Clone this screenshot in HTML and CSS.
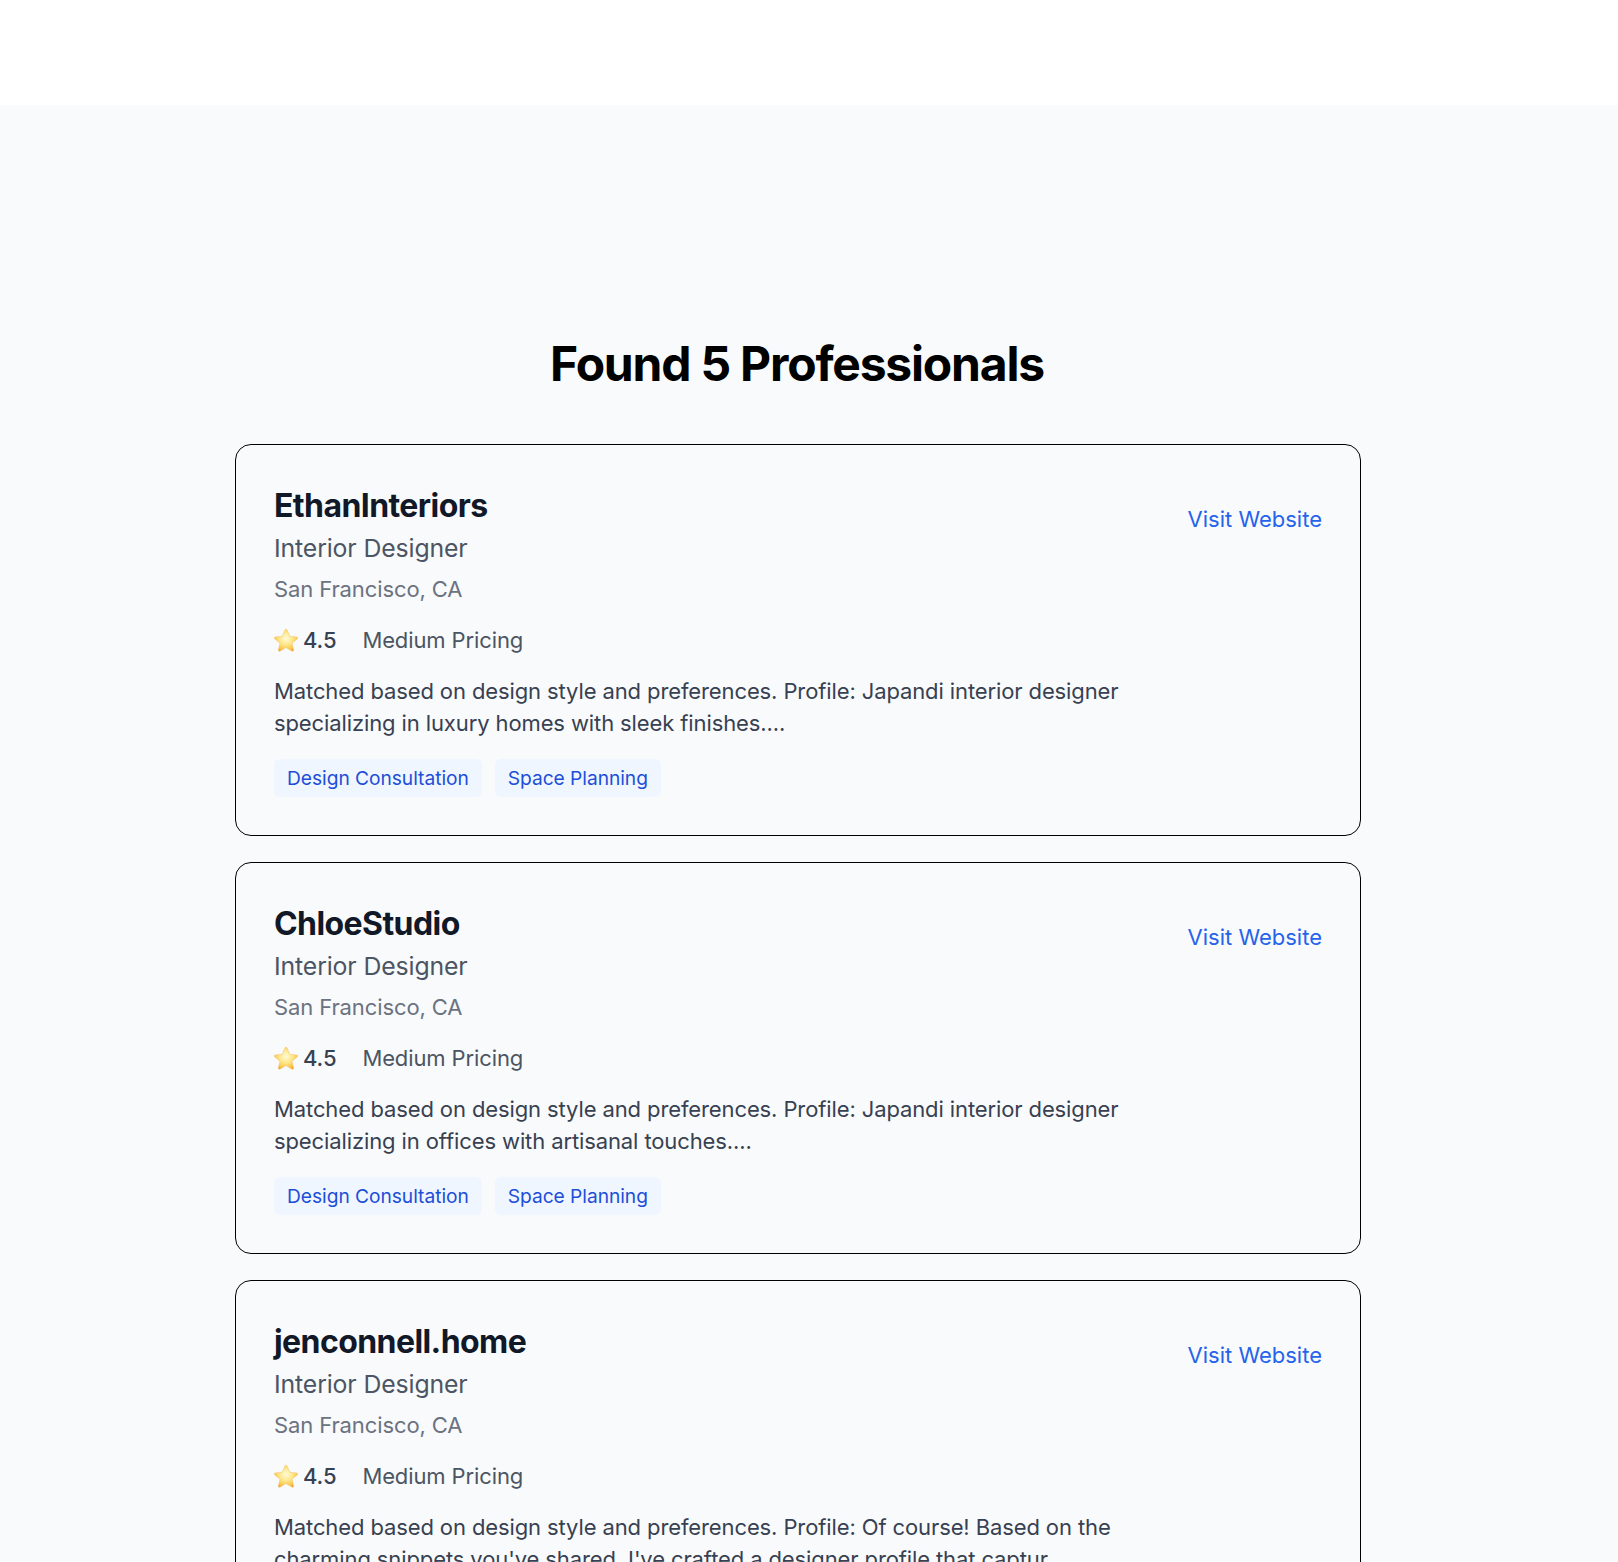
FILE: index.html
```html
<!DOCTYPE html>
<html lang="en">
<head>
<meta charset="utf-8">
<title>Found 5 Professionals</title>
<link rel="stylesheet" href="styles.css">
</head>
<body>
<svg class="defs" width="0" height="0" aria-hidden="true">
  <defs>
    <radialGradient id="star-fill" cx="0.5" cy="0.42" r="0.62">
      <stop offset="0" stop-color="#fffbd6"/>
      <stop offset="0.45" stop-color="#fee78c"/>
      <stop offset="0.8" stop-color="#fbc94f"/>
      <stop offset="1" stop-color="#f0a030"/>
    </radialGradient>
    <symbol id="star" viewBox="0 0 24 24">
      <path d="M12 1.2c.5 0 .9.3 1.1.8l2.7 6.3 6.8.6c1 .1 1.4 1.3.6 2l-5.2 4.4 1.6 6.6c.2 1-.8 1.7-1.7 1.2L12 19.6l-5.9 3.5c-.9.5-1.9-.2-1.7-1.2L6 15.3.8 10.9c-.8-.7-.4-1.9.6-2l6.8-.6L10.9 2c.2-.5.6-.8 1.1-.8z" fill="url(#star-fill)" stroke="#f0b552" stroke-width=".4"/>
    </symbol>
  </defs>
</svg>
<header class="topbar"></header>
<main class="content">
  <h1 class="title">Found 5 Professionals</h1>
  <div class="list">
    <article class="card">
      <div class="info">
        <h2 class="name">EthanInteriors</h2>
        <p class="role">Interior Designer</p>
        <p class="place">San Francisco, CA</p>
        <div class="meta">
          <span class="rating"><svg class="star"><use href="#star"/></svg>4.5</span>
          <span class="pricing">Medium Pricing</span>
        </div>
        <p class="summary">Matched based on design style and preferences. Profile: Japandi interior designer specializing in luxury homes with sleek finishes....</p>
        <div class="tags"><span class="tag">Design Consultation</span><span class="tag">Space Planning</span></div>
      </div>
      <a class="visit" href="#">Visit Website</a>
    </article>
    <article class="card">
      <div class="info">
        <h2 class="name">ChloeStudio</h2>
        <p class="role">Interior Designer</p>
        <p class="place">San Francisco, CA</p>
        <div class="meta">
          <span class="rating"><svg class="star"><use href="#star"/></svg>4.5</span>
          <span class="pricing">Medium Pricing</span>
        </div>
        <p class="summary">Matched based on design style and preferences. Profile: Japandi interior designer specializing in offices with artisanal touches....</p>
        <div class="tags"><span class="tag">Design Consultation</span><span class="tag">Space Planning</span></div>
      </div>
      <a class="visit" href="#">Visit Website</a>
    </article>
    <article class="card">
      <div class="info">
        <h2 class="name">jenconnell.home</h2>
        <p class="role">Interior Designer</p>
        <p class="place">San Francisco, CA</p>
        <div class="meta">
          <span class="rating"><svg class="star"><use href="#star"/></svg>4.5</span>
          <span class="pricing">Medium Pricing</span>
        </div>
        <p class="summary">Matched based on design style and preferences. Profile: Of course! Based on the charming snippets you've shared, I've crafted a designer profile that captur....</p>
        <div class="tags"><span class="tag">Design Consultation</span><span class="tag">Space Planning</span></div>
      </div>
      <a class="visit" href="#">Visit Website</a>
    </article>
  </div>
</main>
</body>
</html>
```
FILE: styles.css
```css
html, body { margin: 0; padding: 0; height: 1562px; overflow: hidden; }
body { background: #f9fafb; font-family: Inter, "Liberation Sans", sans-serif; color: #000; }
.defs { position: absolute; }
.topbar { height: 105px; background: #fff; }
.content { width: 1126px; margin-left: 235px; padding-top: 235px; }
.title { margin: 0 0 56px; padding-right: 2px; font-size: 48px; line-height: 48px; font-weight: 700; text-align: center; letter-spacing: -0.025em; }
.list { display: flex; flex-direction: column; gap: 26px; }
.card { display: flex; justify-content: space-between; align-items: flex-start; box-sizing: border-box; padding: 41px 38px 38px; border: 1px solid #000; border-radius: 16px; }
.info { width: 860px; }
.name { margin: 0; font-size: 32px; line-height: 40px; font-weight: 700; color: #111827; letter-spacing: -0.018em; }
.role { margin: 4px 0 0; font-size: 24.8px; line-height: 36px; color: #4b5563; letter-spacing: -0.005em; }
.place { margin: 7px 0 0; font-size: 22px; line-height: 32px; color: #6b7280; letter-spacing: -0.005em; }
.meta { display: flex; gap: 26px; margin-top: 18.5px; font-size: 22px; line-height: 32px; color: #4b5563; letter-spacing: -0.005em; }
.rating { display: flex; align-items: center; gap: 5px; font-weight: 500; color: #374151; }
.star { width: 24px; height: 24px; }
.summary { margin: 19.5px 0 0; font-size: 22px; line-height: 32px; color: #374151; letter-spacing: -0.005em; }
.tags { display: flex; gap: 13px; margin-top: 20px; }
.tag { padding: 4px 13px; border-radius: 6px; background: #eff6ff; color: #1d4ed8; font-size: 19.2px; line-height: 30px; letter-spacing: -0.002em; }
.visit { margin-top: 16.7px; color: #2563eb; font-size: 22px; line-height: 32px; text-decoration: none; }
```
